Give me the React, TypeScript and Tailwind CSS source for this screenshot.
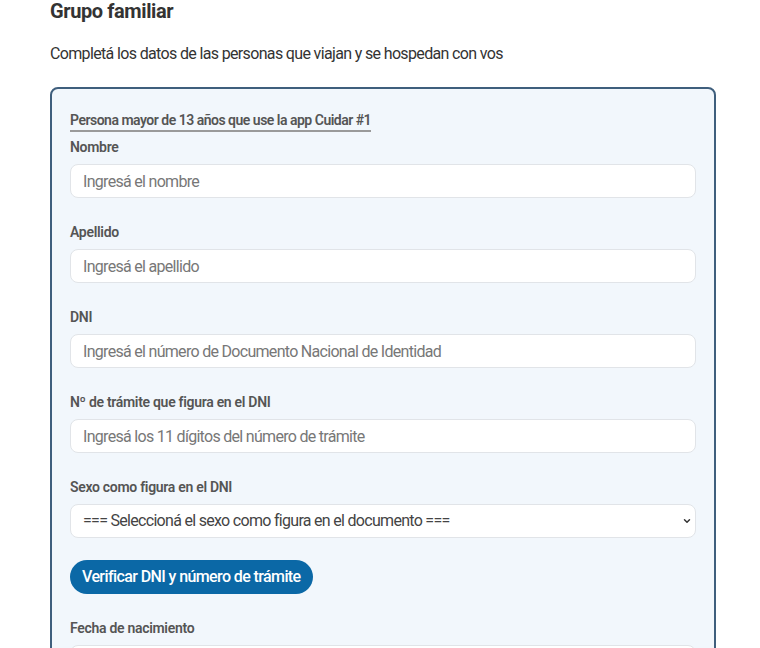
import React from 'react';
import { ChevronDown } from 'lucide-react';

const fields = [
  { label: 'Nombre', placeholder: 'Ingresá el nombre' },
  { label: 'Apellido', placeholder: 'Ingresá el apellido' },
  { label: 'DNI', placeholder: 'Ingresá el número de Documento Nacional de Identidad' },
  { label: 'Nº de trámite que figura en el DNI', placeholder: 'Ingresá los 11 dígitos del número de trámite' },
];

function Field({ label, placeholder }: { label: string; placeholder: string }) {
  return (
    <div className="mb-[24px]">
      <label className="block text-[14px] leading-[20px] font-semibold tracking-[-0.3px] text-[#555555]">{label}</label>
      <input
        type="text"
        placeholder={placeholder}
        className="mt-[7px] block w-full h-[34px] rounded-[8px] border border-[#e1e4e8] bg-white px-[12px] text-[16px] tracking-[-0.7px] text-[#333] placeholder:text-[#777777] outline-none"
      />
    </div>
  );
}

export default function App() {
  return (
    <div className="min-h-[648px] bg-white font-['Roboto',sans-serif] overflow-hidden">
      <div className="ml-[50px] w-[666px]">
        <h2 className="text-[20px] leading-[22px] font-bold tracking-[-0.4px] text-[#333333]">Grupo familiar</h2>
        <p className="mt-[20px] text-[16px] leading-[24px] tracking-[-0.65px] text-[#333333]">
          Completá los datos de las personas que viajan y se hospedan con vos
        </p>

        <div className="mt-[21px] rounded-[8px] border-2 border-[#3f5f7d] bg-[#f2f7fc] px-[18px] pt-[19px] pb-[40px]">
          <div className="inline-block border-b-2 border-[#9a9a9a] text-[14px] leading-[20px] font-semibold tracking-[-0.5px] text-[#555555]">
            Persona mayor de 13 años que use la app Cuidar #1
          </div>

          <div className="mt-[5px]">
            {fields.map((f) => (
              <Field key={f.label} label={f.label} placeholder={f.placeholder} />
            ))}

            <div>
              <label className="block text-[14px] leading-[20px] font-semibold tracking-[-0.3px] text-[#555555]">Sexo como figura en el DNI</label>
              <div className="relative mt-[7px]">
                <select className="block w-full h-[34px] appearance-none rounded-[8px] border border-[#e1e4e8] bg-white px-[12px] text-[16px] tracking-[-0.7px] text-[#444444] outline-none">
                  <option>=== Seleccioná el sexo como figura en el documento ===</option>
                  <option>Femenino</option>
                  <option>Masculino</option>
                </select>
                <ChevronDown className="pointer-events-none absolute right-[4px] top-[12px] h-[10px] w-[10px] text-[#333]" strokeWidth={3.5} />
              </div>
            </div>

            <button className="mt-[22px] h-[34px] rounded-full bg-[#0b68a6] px-[12px] text-[16px] tracking-[-0.6px] text-white font-medium">
              Verificar DNI y número de trámite
            </button>

            <div className="mt-[24px]">
              <label className="block text-[14px] leading-[20px] font-semibold tracking-[-0.3px] text-[#555555]">Fecha de nacimiento</label>
              <input
                type="text"
                className="mt-[7px] block w-full h-[34px] rounded-[8px] border border-[#e1e4e8] bg-white px-[12px] text-[16px]"
              />
            </div>
          </div>
        </div>
      </div>
    </div>
  );
}
